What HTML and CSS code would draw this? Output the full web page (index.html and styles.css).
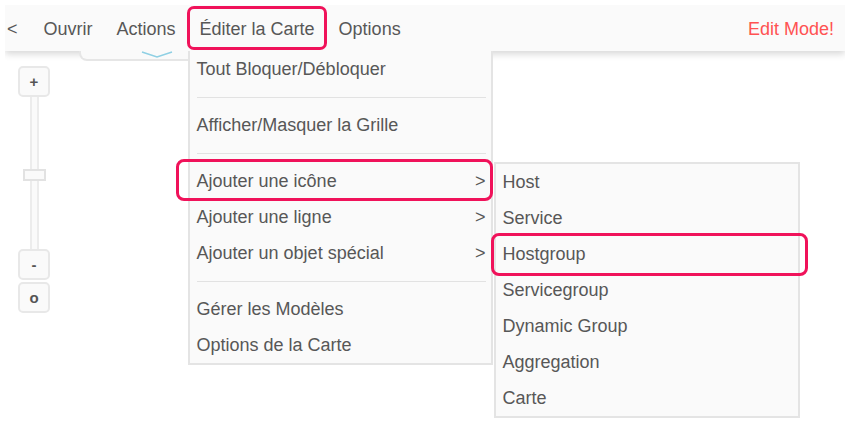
FILE: index.html
```html
<!DOCTYPE html>
<html lang="fr">
<head>
<meta charset="utf-8">
<title>Éditer la Carte</title>
<link rel="stylesheet" href="styles.css">
</head>
<body>
<header class="topbar">
  <nav class="menu">
    <span class="menu-item back">&lt;</span>
    <span class="menu-item">Ouvrir</span>
    <span class="menu-item">Actions</span>
    <div class="menu-item open">
      <span>Éditer la Carte</span>
      <span class="mark mark-top"></span>
      <ul class="dropdown">
        <li>Tout Bloquer/Débloquer</li>
        <li class="sep"></li>
        <li>Afficher/Masquer la Grille</li>
        <li class="sep"></li>
        <li class="has-sub">Ajouter une icône <span class="arrow">&gt;</span>
          <span class="mark mark-icon"></span>
          <ul class="submenu">
            <li>Host</li>
            <li>Service</li>
            <li class="marked">Hostgroup<span class="mark mark-hostgroup"></span></li>
            <li>Servicegroup</li>
            <li>Dynamic Group</li>
            <li>Aggregation</li>
            <li>Carte</li>
          </ul>
        </li>
        <li class="has-sub">Ajouter une ligne <span class="arrow">&gt;</span></li>
        <li class="has-sub">Ajouter un objet spécial <span class="arrow">&gt;</span></li>
        <li class="sep"></li>
        <li>Gérer les Modèles</li>
        <li>Options de la Carte</li>
      </ul>
    </div>
    <span class="menu-item">Options</span>
  </nav>
  <span class="edit-mode">Edit Mode!</span>
  <div class="tab">
    <svg class="chevron" width="32" height="7" viewBox="0 0 32 7"><polyline points="1,1 16,6 31,1" fill="none" stroke="#8fd0e4" stroke-width="1.5"/></svg>
  </div>
</header>
<main class="canvas">
  <div class="zoom">
    <div class="zbtn">+</div>
    <div class="track"><span class="handle"></span></div>
    <div class="zbtn">-</div>
    <div class="zbtn zbtn-reset">o</div>
  </div>
</main>
</body>
</html>
```

FILE: styles.css
```css
html {
  height: 100%;
  background: #ffffff;
}

body {
  margin: 5px;
  min-height: calc(100% - 10px);
  font-family: "Liberation Sans", Arial, sans-serif;
  font-size: 18px;
  color: #575757;
}

ul {
  list-style: none;
  margin: 0;
  padding: 0;
}

.topbar {
  position: relative;
  z-index: 5;
  height: 46px;
  display: flex;
  justify-content: space-between;
  align-items: stretch;
  background: #fafafa;
  box-shadow: 0 3px 7px rgba(0, 0, 0, 0.16);
}

.menu {
  display: flex;
  align-items: stretch;
}

.menu-item {
  position: relative;
  line-height: 44px;
  padding: 2px 12px 0;
  white-space: nowrap;
}

.menu-item.back {
  padding: 2px 14px 0 2px;
}

.edit-mode {
  line-height: 44px;
  padding: 2px 11px 0 0;
  color: #ff5252;
}

.mark {
  position: absolute;
  border: 3px solid #f0125a;
  border-radius: 8px;
  pointer-events: none;
  z-index: 3;
}

.mark-top {
  left: -1px;
  right: 0;
  top: 1px;
  bottom: 1px;
  border-radius: 7px;
}

.mark-icon {
  left: -14px;
  right: -2px;
  top: -4px;
  bottom: -2px;
}

.mark-hostgroup {
  left: -5px;
  right: -10px;
  top: -3px;
  bottom: -4px;
}

.tab {
  position: absolute;
  top: 100%;
  left: 74px;
  width: 160px;
  height: 8px;
  background: #fafafa;
  border: 2px solid #e6e6e6;
  border-top: 0;
  border-radius: 0 0 0 8px;
  z-index: 1;
}

.chevron {
  position: absolute;
  left: 60px;
  top: 0;
}

.dropdown {
  position: absolute;
  top: 100%;
  left: 0;
  width: 305px;
  box-sizing: border-box;
  background: #fafafa;
  border: 2px solid #e4e4e4;
  border-top: 0;
  z-index: 4;
  line-height: 36px;
}

.dropdown li,
.submenu li {
  position: relative;
  line-height: 36px;
  height: 36px;
  padding: 0 5px 0 7px;
  white-space: nowrap;
}

.dropdown li.sep {
  height: 1px;
  padding: 0;
  margin: 10px 5px 9px 7px;
  background: #e2e2e2;
}

.dropdown li.sep-last {
  margin-bottom: 8px;
}

.arrow {
  float: right;
}

.submenu {
  position: absolute;
  top: -1px;
  left: calc(100% + 3px);
  width: 306px;
  box-sizing: border-box;
  background: #fafafa;
  border: 2px solid #e4e4e4;
  z-index: 2;
}

.canvas {
  display: flex;
  padding: 15px 0 0 13px;
}

.zoom {
  display: flex;
  flex-direction: column;
  align-items: center;
  width: 32px;
}

.zbtn {
  width: 32px;
  height: 31px;
  box-sizing: border-box;
  border: 2px solid #e8e8e8;
  border-radius: 5px;
  background: #fafafa;
  display: flex;
  align-items: center;
  justify-content: center;
  font-size: 15px;
  font-weight: bold;
  color: #555555;
}

.zbtn-reset {
  margin-top: 2px;
}

.track {
  position: relative;
  width: 9px;
  height: 152px;
  box-sizing: border-box;
  border-left: 2px solid #ececec;
  border-right: 2px solid #ececec;
  background: #fafafa;
}

.handle {
  position: absolute;
  top: 72px;
  left: -9px;
  width: 23px;
  height: 12px;
  box-sizing: border-box;
  border: 2px solid #e2e2e2;
  background: #fafafa;
}
```
